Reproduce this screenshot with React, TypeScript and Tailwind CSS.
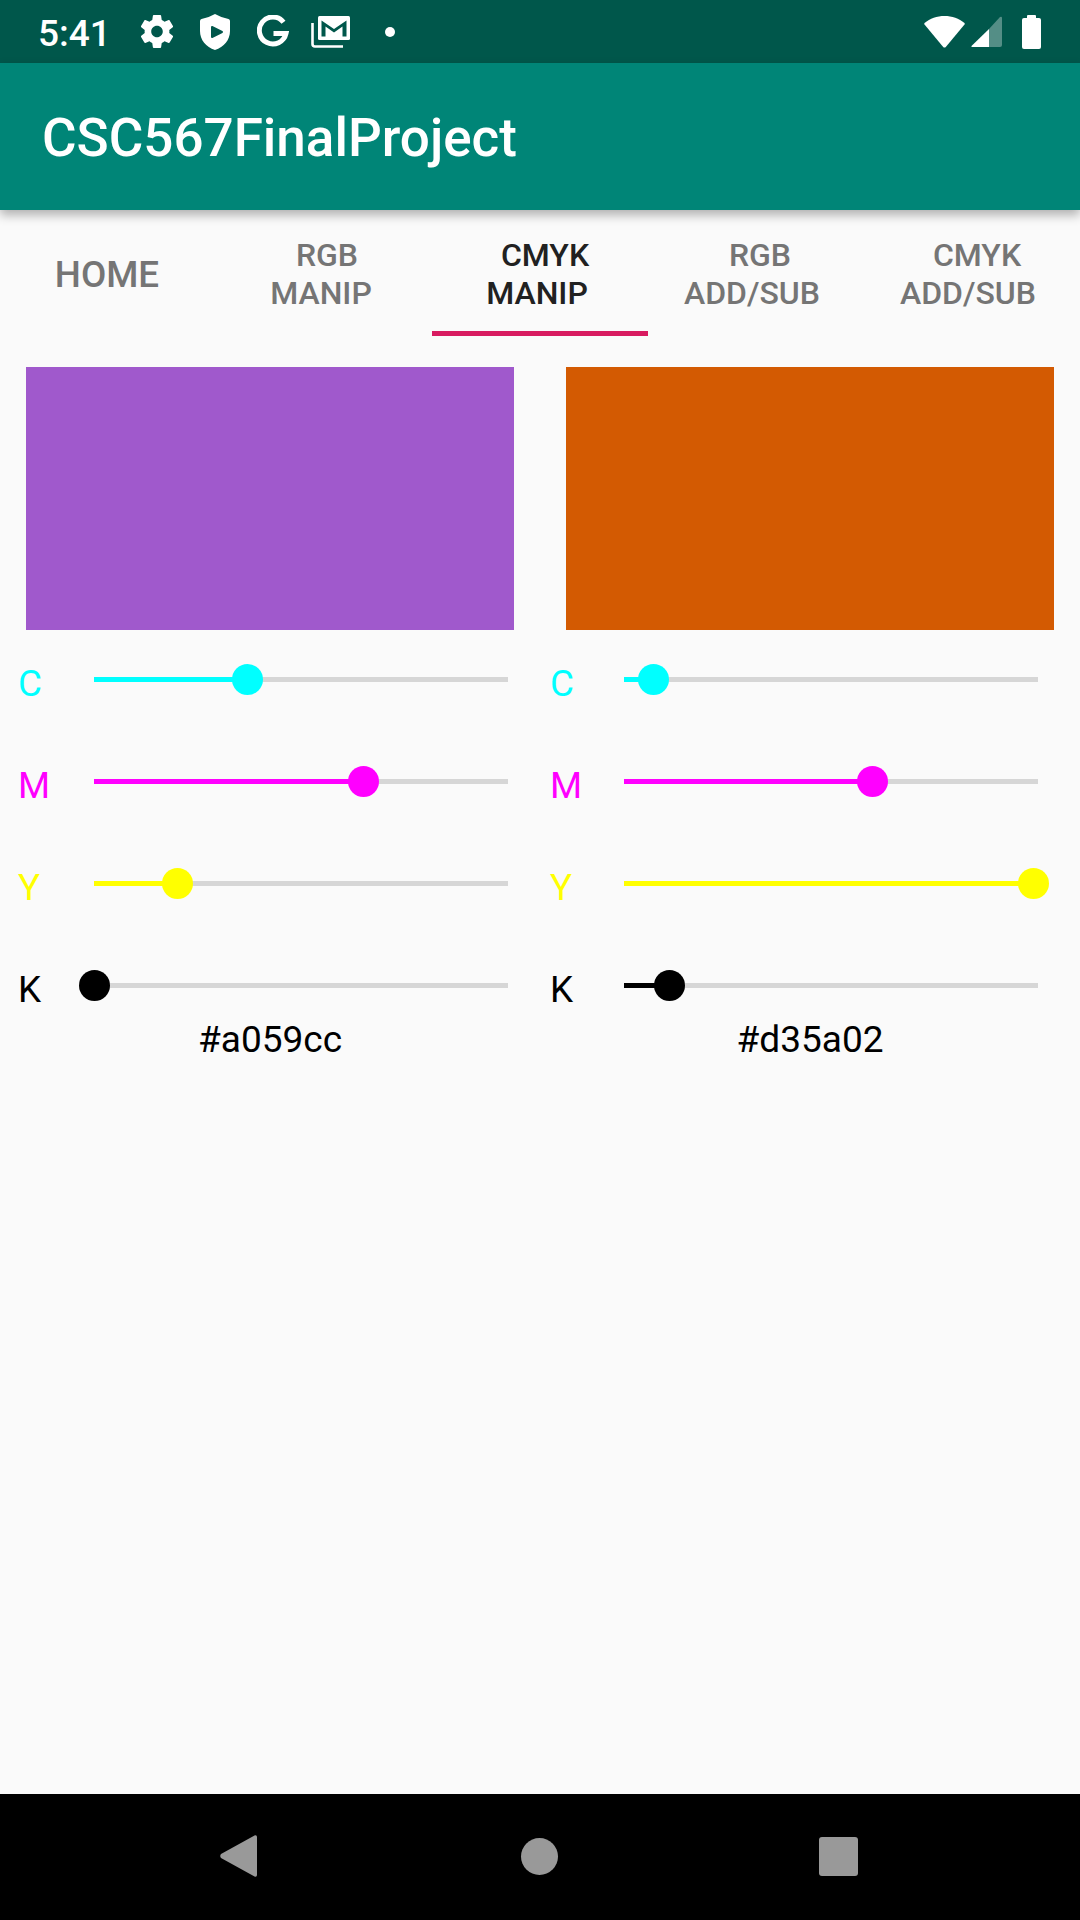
import React from 'react';

const roboto = "font-['Roboto',sans-serif]";

// values are thumb centres as a fraction of the track
const leftSliders = [
  { label: 'C', color: '#00ffff', value: 0.37 },
  { label: 'M', color: '#ff00ff', value: 0.65 },
  { label: 'Y', color: '#ffff00', value: 0.202 },
  { label: 'K', color: '#000000', value: 0 },
];

const rightSliders = [
  { label: 'C', color: '#00ffff', value: 0.072 },
  { label: 'M', color: '#ff00ff', value: 0.6 },
  { label: 'Y', color: '#ffff00', value: 0.99 },
  { label: 'K', color: '#000000', value: 0.11 },
];

const Gear = () => (
  <svg viewBox="2.5 2 19 20" className="w-[32px] h-[33px] fill-white">
    <path d="M19.43 12.98c.04-.32.07-.64.07-.98s-.03-.66-.07-.98l2.11-1.65c.19-.15.24-.42.12-.64l-2-3.46c-.12-.22-.39-.3-.61-.22l-2.49 1c-.52-.4-1.08-.73-1.69-.98l-.38-2.65C14.46 2.18 14.25 2 14 2h-4c-.25 0-.46.18-.49.42l-.38 2.65c-.61.25-1.17.59-1.69.98l-2.49-1c-.23-.09-.49 0-.61.22l-2 3.46c-.13.22-.07.49.12.64l2.11 1.65c-.04.32-.07.65-.07.98s.03.66.07.98l-2.11 1.65c-.19.15-.24.42-.12.64l2 3.46c.12.22.39.3.61.22l2.49-1c.52.4 1.08.73 1.69.98l.38 2.65c.03.24.24.42.49.42h4c.25 0 .46-.18.49-.42l.38-2.65c.61-.25 1.17-.59 1.69-.98l2.49 1c.23.09.49 0 .61-.22l2-3.46c.12-.22.07-.49-.12-.64l-2.11-1.65zM12 15.5c-1.93 0-3.5-1.57-3.5-3.5s1.57-3.5 3.5-3.5 3.5 1.57 3.5 3.5-1.57 3.5-3.5 3.5z" />
  </svg>
);

const Shield = () => (
  <svg viewBox="0 0 30 36" className="w-[30px] h-[36px]">
    <path fill="#fff" d="M15 0 Q22 4 28.5 5 Q30 5.3 30 7 V17 C30 26 24 33 15 36 C6 33 0 26 0 17 V7 Q0 5.3 1.5 5 Q8 4 15 0 Z" />
    <path fill="#00574b" stroke="#00574b" strokeWidth="2" strokeLinejoin="round" d="M12 13 V23 L22 18 Z" />
  </svg>
);

const GoogleG = () => (
  <svg viewBox="0 0 32 33" className="w-[32px] h-[33px]" fill="none">
    <path d="M26.5 7.2 A13.5 13.5 0 1 0 29 18.5 H16.5" stroke="#fff" strokeWidth="5" />
  </svg>
);

const GmailStack = () => (
  <svg viewBox="0 0 39 33" className="w-[39px] h-[33px]" fill="none">
    <path d="M1.5 8 V29 Q1.5 31.5 4 31.5 H32" stroke="#fff" strokeWidth="2.6" />
    <rect x="7" y="1" width="32" height="24" rx="1.5" fill="#fff" />
    <path fill="#00574b" d="M10.5 5.5 L23 14 L35.5 5.5 V21.5 H31.5 V11.5 L23 17.5 L14.5 11.5 V21.5 H10.5 Z" />
  </svg>
);

const Wifi = () => (
  <svg viewBox="0 0 41 32" className="w-[41px] h-[32px]">
    <path fill="#fff" d="M20.5 0 C28 0 35 2.5 40.5 7 Q41 7.8 40.5 8.5 L21.8 31 Q20.5 32.2 19.2 31 L0.5 8.5 Q0 7.8 0.5 7 C6 2.5 13 0 20.5 0 Z" />
  </svg>
);

const Signal = () => (
  <svg viewBox="0 0 31 31" className="w-[31px] h-[31px]">
    <path fill="#fff" fillOpacity="0.33" d="M18 13 L29 1 Q31 0 31 2 V29 Q31 31 29 31 H18 Z" />
    <path fill="#fff" d="M18 13 V31 H1 Q0 31 0.5 30 Z" />
  </svg>
);

const Battery = () => (
  <div className="flex flex-col items-center">
    <div className="w-[9px] h-[3px] bg-white rounded-t-[1px]" />
    <div className="w-[19px] h-[31px] bg-white rounded-[2px]" />
  </div>
);

const StatusBar = () => (
  <div className="h-[63px] bg-[#00574b] flex items-center pl-[38px] pr-[39px]">
    <span className={`${roboto} text-[37px] leading-none text-white font-medium w-[103px] pt-[3px]`}>5:41</span>
    <div className="flex items-center">
      <Gear />
      <div className="ml-[27px]"><Shield /></div>
      <div className="ml-[27px]"><GoogleG /></div>
      <div className="ml-[22px]"><GmailStack /></div>
      <div className="ml-[35px] w-[10px] h-[10px] rounded-full bg-white" />
    </div>
    <div className="ml-auto flex items-center">
      <Wifi />
      <div className="ml-[6px]"><Signal /></div>
      <div className="ml-[20px]"><Battery /></div>
    </div>
  </div>
);

const AppBar = () => (
  <div className="relative z-10 h-[147px] bg-[#008577] flex items-center pl-[42px] shadow-[0_5px_10px_rgba(0,0,0,0.3)]">
    <h1 className={`${roboto} text-[53px] leading-none font-medium text-white pt-[4px]`}>CSC567FinalProject</h1>
  </div>
);

const tabLine = `${roboto} text-[32px] leading-[38px] font-medium`;

const TabBar = () => (
  <div className="h-[126px] flex">
    <div className="w-[216px] h-full flex items-center justify-center pt-[4px] pr-[2px]">
      <span className={`${roboto} text-[36.75px] font-medium text-[#757575]`}>HOME</span>
    </div>
    <div className={`w-[216px] h-full flex flex-col items-center justify-center pt-[2px] pr-[2px] text-[#757575] ${tabLine}`}>
      <span className="pl-[8px]">RGB</span>
      <span className="pr-[4px]">MANIP</span>
    </div>
    <div className={`w-[216px] h-full flex flex-col items-center justify-center border-b-[5px] border-[#d81b60] pt-[7px] pr-[2px] text-[#212121] ${tabLine}`}>
      <span className="pl-[12px]">CMYK</span>
      <span className="pr-[4px]">MANIP</span>
    </div>
    <div className={`w-[216px] h-full flex flex-col items-center justify-center pt-[2px] pr-[2px] text-[#757575] ${tabLine}`}>
      <span className="pl-[10px]">RGB</span>
      <span className="pr-[6px]">ADD/SUB</span>
    </div>
    <div className={`w-[216px] h-full flex flex-col items-center justify-center pt-[2px] pr-[2px] text-[#757575] ${tabLine}`}>
      <span className="pl-[12px]">CMYK</span>
      <span className="pr-[6px]">ADD/SUB</span>
    </div>
  </div>
);

const Slider = ({ label, color, value, labelWidth }: { label: string; color: string; value: number; labelWidth: string }) => (
  <div className="h-[102px] flex items-center">
    <span
      className={`${roboto} text-[36.75px] leading-none pt-[10px] ${labelWidth}`}
      style={{ color }}
    >
      {label}
    </span>
    <div className="relative w-[414px] h-[5px] bg-[#d6d6d6]">
      <div className="h-full" style={{ width: `${value * 100}%`, backgroundColor: color }} />
      <div
        className="absolute top-[-13px] ml-[-15.5px] w-[31px] h-[31px] rounded-full"
        style={{ left: `${value * 100}%`, backgroundColor: color }}
      />
    </div>
  </div>
);

const ColorColumn = ({ color, hex, sliders, inset, labelWidth }: { color: string; hex: string; sliders: typeof leftSliders; inset: string; labelWidth: string }) => (
  <div className="w-[540px] flex flex-col">
    <div className="mx-[26px] h-[263px]" style={{ backgroundColor: color }} />
    <div className={`mt-[-2px] ${inset}`}>
      {sliders.map((s) => (
        <Slider key={s.label} {...s} labelWidth={labelWidth} />
      ))}
    </div>
    <div className={`${roboto} text-[37px] leading-[44px] text-black text-center mt-[-18px]`}>{hex}</div>
  </div>
);

const NavBar = () => (
  <div className="h-[126px] bg-black flex items-center pb-[2px] pl-[220px]">
    <svg viewBox="0 0 37 42" className="w-[37px] h-[42px]">
      <path fill="#999" d="M35 0.3 Q37 0 37 2 V40 Q37 42 35 41.7 L1 23 Q-0.5 21 1 19 Z" />
    </svg>
    <div className="ml-[264px] w-[37px] h-[37px] rounded-full bg-[#999]" />
    <div className="ml-[261px] w-[39px] h-[39px] rounded-[3px] bg-[#999]" />
  </div>
);

export default function App() {
  return (
    <div className="w-[1080px] h-[1920px] bg-[#fafafa] flex flex-col overflow-hidden">
      <StatusBar />
      <AppBar />
      <TabBar />
      <div className="flex-1 pt-[31px] flex">
        <ColorColumn color="#a059cc" hex="#a059cc" sliders={leftSliders} inset="pl-[18px]" labelWidth="w-[76px]" />
        <ColorColumn color="#d35a02" hex="#d35a02" sliders={rightSliders} inset="pl-[10px]" labelWidth="w-[74px]" />
      </div>
      <NavBar />
    </div>
  );
}
